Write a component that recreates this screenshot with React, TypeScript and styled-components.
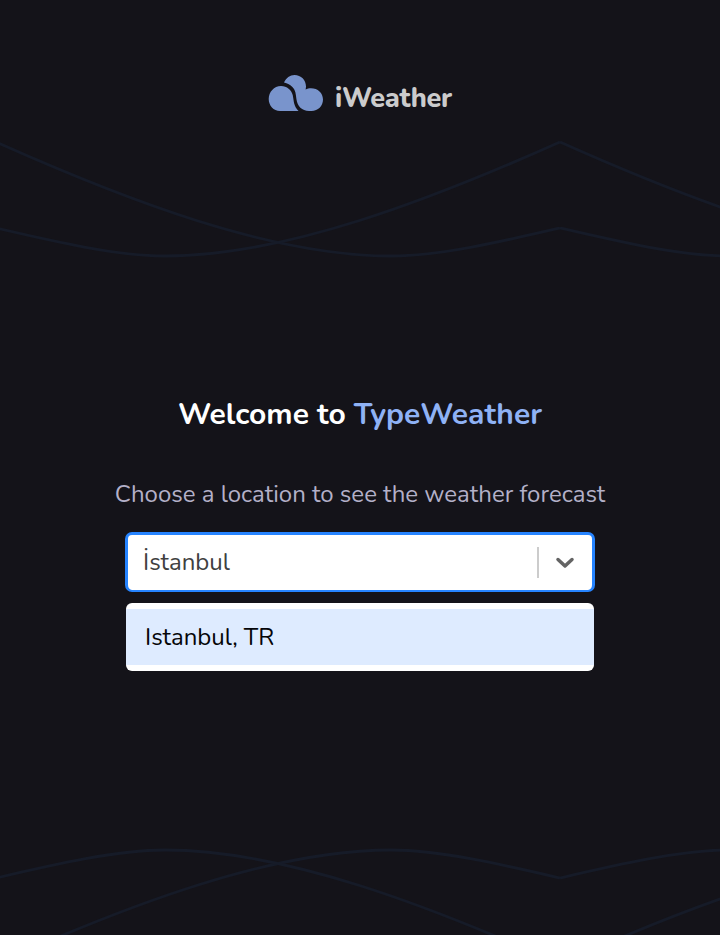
import React from 'react';
import styled, { createGlobalStyle } from 'styled-components';

const GlobalStyle = createGlobalStyle`
  * { box-sizing: border-box; }
  html, body { margin: 0; padding: 0; background: #141319; }
  body { font-family: Nunito, Lato, "Open Sans", sans-serif; }
`;

const Page = styled.div`
  position: relative;
  display: flex;
  flex-direction: column;
  align-items: center;
  width: 720px;
  height: 935px;
  overflow: hidden;
  background: #141319;
`;

const Backdrop = styled.svg`
  position: absolute;
  inset: 0;
  pointer-events: none;
`;

const Header = styled.header`
  position: relative;
  display: flex;
  align-items: center;
  gap: 11px;
  width: 184px;
  height: 46px;
  margin-top: 75px;
`;

const LogoMark = styled.svg`
  flex: none;
  align-self: flex-start;
`;

const Brand = styled.span`
  padding-top: 1px;
  color: #cbcbcc;
  font-size: 27px;
  font-weight: 800;
  line-height: 46px;
  letter-spacing: -0.25px;
  white-space: nowrap;
`;

const Main = styled.main`
  position: relative;
  display: flex;
  flex-direction: column;
  align-items: center;
  margin-top: 274px;
`;

const Title = styled.h1`
  margin: 0;
  color: #fff;
  font-size: 30px;
  font-weight: 700;
  line-height: 40px;
  white-space: nowrap;
`;

const Highlight = styled.span`
  color: #8fb2f5;
`;

const Subtitle = styled.p`
  margin: 42px 0 0;
  color: #b3b0c8;
  font-size: 24px;
  line-height: 34px;
  white-space: nowrap;
`;

const Control = styled.div`
  display: flex;
  align-items: center;
  width: 470px;
  height: 60px;
  margin-top: 21px;
  padding-left: 15px;
  background: #fff;
  border: 3px solid #2684ff;
  border-bottom-width: 2px;
  border-radius: 7px;
`;

const Value = styled.span`
  flex: 1;
  padding-bottom: 2px;
  color: #404040;
  font-size: 24px;
  line-height: 36px;
`;

const Separator = styled.span`
  width: 2px;
  height: 31px;
  background: #ccc;
`;

const Indicator = styled.span`
  display: flex;
  justify-content: center;
  width: 53px;
`;

const Menu = styled.div`
  width: 468px;
  height: 68px;
  margin-top: 11px;
  padding: 6px 0;
  background: #fff;
  border-radius: 6px;
`;

const Option = styled.div`
  height: 56px;
  padding-left: 19px;
  background: #deebff;
  color: #050508;
  font-size: 24px;
  line-height: 56px;
`;

const WAVE_PERIOD = 564;

const Waves = () => (
  <Backdrop width="720" height="935" viewBox="0 0 720 935" fill="none" stroke="#161b28" strokeWidth="2.8">
    <defs>
      <g id="wave">
        <path d="M0 142C130 200 275 256 395 256C444 256 508 241 564 228" />
        <path d="M564 142C434 200 289 256 169 256C120 256 56 241 0 228" />
      </g>
      <g id="waves">
        <use href="#wave" x={-4} />
        <use href="#wave" x={WAVE_PERIOD - 4} />
      </g>
    </defs>
    <use href="#waves" />
    <use href="#waves" transform="translate(0 1106) scale(1 -1)" />
  </Backdrop>
);

const App: React.FC = () => (
  <>
    <GlobalStyle />
    <Page>
      <Waves />
      <Header>
        <LogoMark width="56" height="36" viewBox="0 0 56 36" fill="#7994cc">
          <path d="M13 11C19 11 23.5 15 24.7 20C26 26 25.5 31 30.5 36H12C5.5 36 .7 30.5 .7 24C.7 17 6 11 13 11Z" />
          <path d="M16 7.5C18 3 22 0 26.5 0C33 0 38 5 38 11.5C38 12.5 37.8 13.7 37.6 14.6C39.2 13.7 41 13.2 43 13.2C49.8 13.2 55 18 55 24.5C55 31 50 36 43.5 36H41C34 36 29.3 31 28.5 24.5C27.8 19 27.7 15.6 24.6 12.2C22.3 9.7 19.5 8.2 16 7.5Z" />
        </LogoMark>
        <Brand>iWeather</Brand>
      </Header>
      <Main>
        <Title>Welcome to <Highlight>TypeWeather</Highlight></Title>
        <Subtitle>Choose a location to see the weather forecast</Subtitle>
        <Control>
          <Value>İstanbul</Value>
          <Separator />
          <Indicator>
            <svg width="20" height="14" viewBox="0 0 20 14" fill="none" stroke="#646464" strokeWidth="3.5" strokeLinecap="round" strokeLinejoin="round">
              <path d="M3 3.5L10 10L17 3.5" />
            </svg>
          </Indicator>
        </Control>
        <Menu>
          <Option>Istanbul, TR</Option>
        </Menu>
      </Main>
    </Page>
  </>
);

export default App;
